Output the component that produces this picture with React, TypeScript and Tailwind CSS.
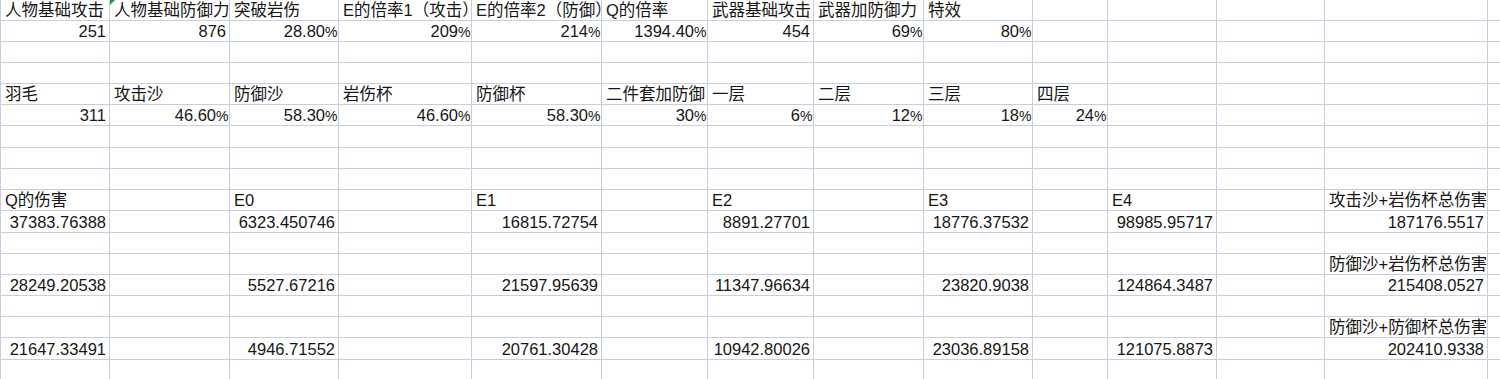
import React from 'react';

// column widths incl. right grid line
const COLS = [
  'w-[109px]', 'w-[120px]', 'w-[109px]', 'w-[133px]', 'w-[130px]', 'w-[106px]', 'w-[106px]',
  'w-[110px]', 'w-[109px]', 'w-[75px]', 'w-[109px]', 'w-[108px]', 'w-[163px]', 'w-[120px]',
];
// row heights incl. bottom grid line
const ROWS = [
  'h-[21px]', 'h-[21px]', 'h-[21px]', 'h-[21px]', 'h-[21px]', 'h-[21px]', 'h-[22px]', 'h-[21px]', 'h-[21px]',
  'h-[21px]', 'h-[22px]', 'h-[21px]', 'h-[21px]', 'h-[21px]', 'h-[21px]', 'h-[21px]', 'h-[22px]', 'h-[21px]',
];

type Cell = string | number | null;
type Row = { cells: Cell[]; right?: boolean };

const blank = (): Row => ({ cells: [] });
const _ = null;

const sheet: Row[] = [
  { cells: ['人物基础攻击', '人物基础防御力', '突破岩伤', 'E的倍率1（攻击）', 'E的倍率2（防御）', 'Q的倍率', '武器基础攻击', '武器加防御力', '特效'] },
  { cells: [251, 876, '28.80%', '209%', '214%', '1394.40%', 454, '69%', '80%'], right: true },
  blank(),
  blank(),
  { cells: ['羽毛', '攻击沙', '防御沙', '岩伤杯', '防御杯', '二件套加防御', '一层', '二层', '三层', '四层'] },
  { cells: [311, '46.60%', '58.30%', '46.60%', '58.30%', '30%', '6%', '12%', '18%', '24%'], right: true },
  blank(),
  blank(),
  blank(),
  { cells: ['Q的伤害', _, 'E0', _, 'E1', _, 'E2', _, 'E3', _, 'E4', _, '攻击沙+岩伤杯总伤害'] },
  { cells: ['37383.76388', _, '6323.450746', _, '16815.72754', _, '8891.27701', _, '18776.37532', _, '98985.95717', _, '187176.5517'], right: true },
  blank(),
  { cells: [_, _, _, _, _, _, _, _, _, _, _, _, '防御沙+岩伤杯总伤害'] },
  { cells: ['28249.20538', _, '5527.67216', _, '21597.95639', _, '11347.96634', _, '23820.9038', _, '124864.3487', _, '215408.0527'], right: true },
  blank(),
  { cells: [_, _, _, _, _, _, _, _, _, _, _, _, '防御沙+防御杯总伤害'] },
  { cells: ['21647.33491', _, '4946.71552', _, '20761.30428', _, '10942.80026', _, '23036.89158', _, '121075.8873', _, '202410.9338'], right: true },
  blank(),
];

const renderValue = (v: Cell) => {
  if (v === null) return null;
  const s = String(v);
  if (s.endsWith('%')) {
    return (
      <>
        {s.slice(0, -1)}
        <span className="inline-block w-[10px] text-[14px] tracking-[-1px]">%</span>
      </>
    );
  }
  return s;
};

export default function App() {
  return (
    <div className="w-[1500px] h-[379px] overflow-hidden bg-white border-l border-[#c9cde2] text-[#161616] text-[16.5px] leading-none font-['Liberation_Sans','Noto_Sans_CJK_SC',sans-serif]">
      {sheet.map((row, r) => (
        <div key={r} className={`flex ${ROWS[r]}`}>
          {COLS.map((w, c) => {
            const v = row.cells[c] ?? null;
            return (
              <div
                key={c}
                className={`relative shrink-0 flex items-end overflow-hidden whitespace-nowrap border-r border-b border-[#c9cde2] pb-[2px] ${w} ${
                  row.right ? 'justify-end pr-[3px]' : 'justify-start pl-[4px]'
                }`}
              >
                {r === 0 && c === 1 && (
                  <span className="absolute left-0 top-0 w-0 h-0 border-t-[5px] border-r-[5px] border-t-[#1f9a3a] border-r-transparent" />
                )}
                {renderValue(v)}
              </div>
            );
          })}
        </div>
      ))}
    </div>
  );
}
